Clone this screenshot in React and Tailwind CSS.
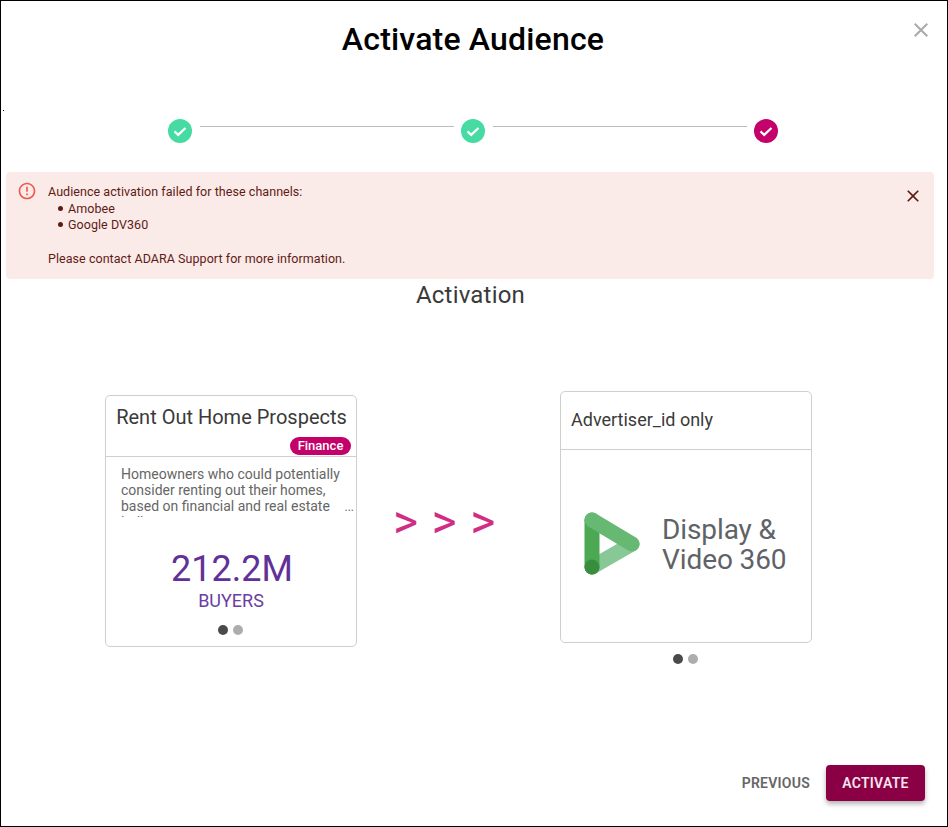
import React from "react";

const CLOSE = "M19 6.41L17.59 5 12 10.59 6.41 5 5 6.41 10.59 12 5 17.59 6.41 19 12 13.41 17.59 19 19 17.59 13.41 12z";
const ERROR_OUTLINE = "M11 15h2v2h-2zm0-8h2v6h-2zm.99-5C6.47 2 2 6.48 2 12s4.47 10 9.99 10C17.52 22 22 17.52 22 12S17.52 2 11.99 2zM12 20c-4.42 0-8-3.58-8-8s3.58-8 8-8 8 3.58 8 8-3.58 8-8 8z";

const Icon = ({ d, className }) => (
  <svg viewBox="0 0 24 24" className={className} fill="currentColor">
    <path d={d} />
  </svg>
);

const StepDot = ({ color }) => (
  <div className={`w-6 h-6 rounded-full flex items-center justify-center shrink-0 ${color}`}>
    <svg viewBox="0 0 24 24" className="w-6 h-6" fill="none" stroke="white" strokeWidth="2.2">
      <path d="M6.5 12.4l3.7 3.5L17.5 9" />
    </svg>
  </div>
);

const Dots = () => (
  <div className="flex items-center justify-center gap-[5px] pr-px">
    <span className="w-[10px] h-[10px] rounded-full bg-[#4a4a4a]" />
    <span className="w-[10px] h-[10px] rounded-full bg-[#adadad]" />
  </div>
);

const DvLogo = () => (
  <svg viewBox="0 0 56 63" className="w-14 h-[63px] shrink-0" fill="none" strokeWidth="15" strokeLinecap="round">
    <path d="M48 32L8 55" stroke="#88c896" />
    <path d="M8 8V55" stroke="#4ca853" />
    <path d="M8 8L48 32" stroke="#66b872" />
    <circle cx="8" cy="55" r="7.5" fill="#378f3e" />
  </svg>
);

const App = () => {
  return (
    <div className="relative w-[948px] h-[827px] bg-white border border-black flex flex-col font-['Roboto',sans-serif] overflow-hidden">
      <button className="absolute top-[17px] right-[14px] text-[#a9a9a9]">
        <Icon d={CLOSE} className="w-6 h-6" />
      </button>
      <span className="absolute left-[2px] top-[109px] w-px h-px bg-black" />

      <h1 className="mt-[15px] pr-[2px] text-center text-[32px] leading-[46px] font-medium tracking-[0.18px] text-black">Activate Audience</h1>

      {/* stepper */}
      <div className="mt-[57px] ml-[167px] flex items-start">
        <StepDot color="bg-[#45dba3]" />
        <div className="w-[254px] h-px bg-[#bdbdbd] ml-2 mr-[7px] mt-[7px]" />
        <StepDot color="bg-[#45dba3]" />
        <div className="w-[254px] h-px bg-[#bdbdbd] ml-2 mr-[7px] mt-[7px]" />
        <StepDot color="bg-[#c4006a]" />
      </div>

      {/* alert */}
      <div className="mt-[29px] mx-[5px] w-[928px] h-[107px] rounded bg-[#faebe8] flex pl-[11px] pr-[11px] pt-[9px] text-[#611a15] text-[12.5px] tracking-[0.05px]">
        <Icon d={ERROR_OUTLINE} className="w-5 h-5 text-[#ee5a4e] shrink-0" />
        <div className="ml-[11px] flex-1 leading-[16px]">
          <p className="pt-[3px]">Audience activation failed for these channels:</p>
          <ul className="mt-[1px] ml-[20px] leading-[15.5px]">
            <li className="flex items-center"><span className="w-[5px] h-[5px] rounded-full bg-[#611a15] mr-[5px] ml-[-10px]" />Amobee</li>
            <li className="flex items-center"><span className="w-[5px] h-[5px] rounded-full bg-[#611a15] mr-[5px] ml-[-10px]" />Google DV360</li>
          </ul>
          <p className="mt-[19px]">Please contact ADARA Support for more information.</p>
        </div>
        <button className="h-5 mt-[5px] text-[#611a15]">
          <Icon d={CLOSE} className="w-5 h-5" />
        </button>
      </div>

      <h2 className="mt-[2px] text-center pr-[7px] text-[24px] leading-[28px] tracking-[0.2px] text-[#3a3a3a]">Activation</h2>

      {/* cards */}
      <div className="mt-[82px] ml-[104px] flex items-start">
        <div className="mt-[4px] w-[252px] h-[252px] rounded-[5px] border border-[#cfcfcf] flex flex-col">
          <div className="h-[61px] border-b border-[#cfcfcf] relative">
            <p className="pt-[8px] pl-px text-center text-[20px] leading-[26px] text-[#3a3a3a]">Rent Out Home Prospects</p>
            <span className="absolute right-[5px] top-[41px] h-[18px] w-[61px] text-center rounded-full bg-[#c4006a] text-white text-[13px] leading-[18px] font-medium">Finance</span>
          </div>
          <div className="relative pl-[15px] pr-[10px] pt-[9px]">
            <p className="h-[51px] overflow-hidden text-[14px] leading-[16px] text-[#666]">
              Homeowners who could potentially consider renting out their homes, based on financial and real estate indicators
            </p>
            <span className="absolute right-[2px] top-[42px] text-[12px] leading-[16px] text-[#666]">...</span>
          </div>
          <div className="mt-[30px] text-center text-[#623198]">
            <p className="pl-[2px] text-[36px] leading-[44px]">212.2M</p>
            <p className="text-[18px] leading-[20px] text-[#6a3ea1]">BUYERS</p>
          </div>
          <div className="mt-[14px]"><Dots /></div>
        </div>

        <div className="w-[203px] pt-[99px] pl-[36px] flex gap-[13.5px] text-[#d22d84] text-[48px] leading-[64px]">
          <span>&gt;</span>
          <span>&gt;</span>
          <span>&gt;</span>
        </div>

        <div>
          <div className="w-[252px] h-[252px] rounded-[5px] border border-[#cfcfcf] flex flex-col">
            <div className="h-[58px] border-b border-[#cfcfcf] flex items-center pl-[10px] pb-[2px] text-[18px] text-[#3a3a3a]">Advertiser_id only</div>
            <div className="flex-1 flex items-center pl-[23px] pb-[6px]">
              <DvLogo />
              <p className="ml-[22px] pt-[3px] text-[#5f6368] text-[28px] leading-[30px] tracking-[-0.1px]">Display &amp;<br />Video 360</p>
            </div>
          </div>
          <div className="mt-[11px]"><Dots /></div>
        </div>
      </div>

      {/* footer */}
      <div className="mt-auto mb-[25px] mr-[22px] flex items-center justify-end text-[14px] font-semibold tracking-[0.25px]">
        <button className="mr-4 text-[#666]">PREVIOUS</button>
        <button className="w-[99px] h-9 rounded bg-[#8b0045] text-[#f5e6ee] shadow-[0_3px_5px_rgba(0,0,0,0.3)]">ACTIVATE</button>
      </div>
    </div>
  );
};

export default App;
